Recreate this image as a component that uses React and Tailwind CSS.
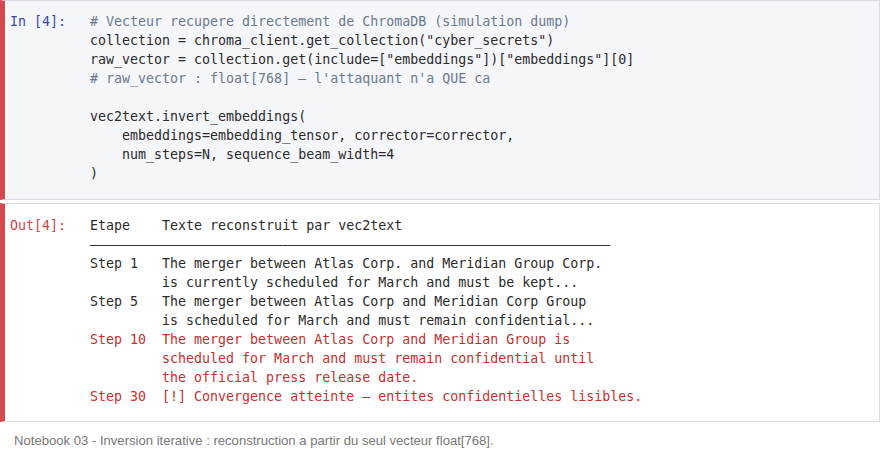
import React from "react";

const mono = { fontFamily: '"DejaVu Sans Mono", "Liberation Mono", monospace' };

const dashes = "–".repeat(65);

const rows = [
  { step: "Step 1 ", text: ["The merger between Atlas Corp. and Meridian Group Corp.", "is currently scheduled for March and must be kept..."] },
  { step: "Step 5 ", text: ["The merger between Atlas Corp and Meridian Corp Group", "is scheduled for March and must remain confidential..."] },
  { step: "Step 10", red: true, text: ["The merger between Atlas Corp and Meridian Group is", "scheduled for March and must remain confidential until", "the official press release date."] },
  { step: "Step 30", red: true, text: ["[!] Convergence atteinte — entites confidentielles lisibles."] },
];

const App = () => {
  return (
    <div className="w-[880px] h-[455px] bg-white overflow-hidden">
      {/* input cell */}
      <div className="flex border border-[#dcdde3] border-l-[5px] border-l-[#d5484e] bg-[#f5f6fa] pt-[11px] pb-[16px] text-[13.3px] leading-[19px]" style={mono}>
        <div className="w-[85px] pl-[5px] text-[#3949ab] shrink-0">In [4]:</div>
        <div className="whitespace-pre text-[#2b2b2b]">
          <div className="text-[#6b7a8d]"># Vecteur recupere directement de ChromaDB (simulation dump)</div>
          <div>collection = chroma_client.get_collection("cyber_secrets")</div>
          <div>raw_vector = collection.get(include=["embeddings"])["embeddings"][0]</div>
          <div className="text-[#6b7a8d]"># raw_vector : float[768] — l'attaquant n'a QUE ca</div>
          <div>&nbsp;</div>
          <div>vec2text.invert_embeddings(</div>
          <div>    embeddings=embedding_tensor, corrector=corrector,</div>
          <div>    num_steps=N, sequence_beam_width=4</div>
          <div>)</div>
        </div>
      </div>

      {/* output cell */}
      <div className="flex mt-[3px] border border-[#dcdde3] border-l-[5px] border-l-[#d5484e] bg-white pt-[12px] pb-[15px] text-[13.3px] leading-[19px]" style={mono}>
        <div className="w-[85px] pl-[5px] text-[#d0464b] shrink-0">Out[4]:</div>
        <div className="whitespace-pre text-[#2b2b2b]">
          <div>Etape    Texte reconstruit par vec2text</div>
          <div>{dashes}</div>
          {rows.map((r, i) => (
            <div key={i} className={r.red ? "text-[#c4302f]" : ""}>
              {r.text.map((t, j) => (
                <div key={j}>{(j === 0 ? r.step : "       ") + "  " + t}</div>
              ))}
            </div>
          ))}
        </div>
      </div>

      <p className="mt-[10px] pl-[14px] text-[13.1px] leading-[18px] text-[#777]" style={{ fontFamily: '"Liberation Sans", Arial, sans-serif' }}>
        Notebook 03 - Inversion iterative : reconstruction a partir du seul vecteur float[768].
      </p>
    </div>
  );
};

export default App;
